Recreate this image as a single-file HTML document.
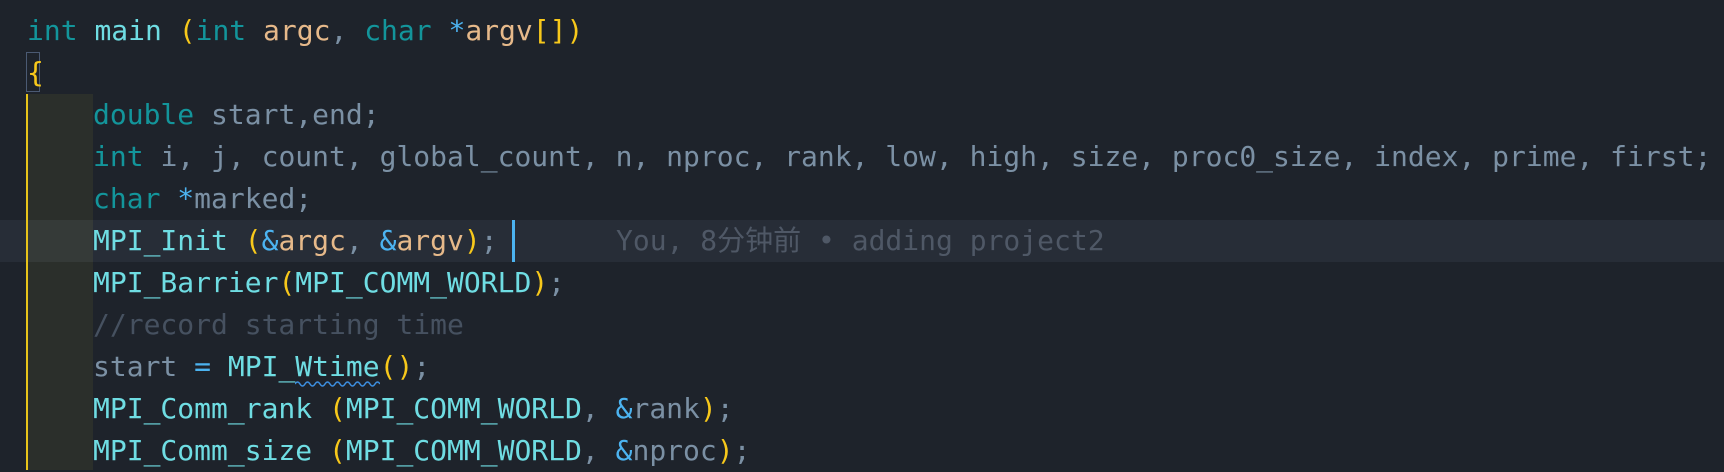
<!DOCTYPE html>
<html><head><meta charset="utf-8"><style>
html,body{margin:0;padding:0;}
body{width:1724px;height:470px;background:#1e232b;position:relative;overflow:hidden;font-family:"DejaVu Sans Mono","Liberation Mono","Noto Sans CJK SC",monospace;font-size:28px;}
.l{position:absolute;left:0;height:42px;line-height:42px;white-space:pre;}
.k{color:#13959b}.f{color:#6fdde3}.p{color:#e6b98a}.v{color:#7b90a4}.y{color:#f7c81b}.s{color:#4cb3f0}.c{color:#465160}
</style></head><body>
<div style="position:absolute;left:0;top:220px;width:1724px;height:42px;background:#272d37"></div>
<div style="position:absolute;left:27px;top:94px;width:66px;height:376px;background:#2b2f2b"></div>
<div style="position:absolute;left:27px;top:220px;width:66px;height:42px;background:#353a38"></div>
<div style="position:absolute;left:26px;top:94px;width:2px;height:376px;background:#e8c41a"></div>
<div style="position:absolute;left:26px;top:52px;width:14px;height:40px;border:1px solid #4b5a73;box-sizing:border-box"></div>
<div style="position:absolute;left:512px;top:220px;width:3px;height:42px;background:#4cb3f0"></div>
<svg style="position:absolute;left:295px;top:380px" width="85" height="8"><path d="M0 4 Q2.5 0 5 4 T10 4 T15 4 T20 4 T25 4 T30 4 T35 4 T40 4 T45 4 T50 4 T55 4 T60 4 T65 4 T70 4 T75 4 T80 4 T85 4" fill="none" stroke="#3d8fe0" stroke-width="1.5"/></svg>
<div class="l" style="top:10px;left:27px"><span class="k">int</span> <span class="f">main</span> <span class="y">(</span><span class="k">int</span> <span class="p">argc</span><span class="v">,</span> <span class="k">char</span> <span class="s">*</span><span class="p">argv</span><span class="y">[])</span></div>
<div class="l" style="top:52px;left:27px"><span class="y">{</span></div>
<div class="l" style="top:94px;left:93px"><span class="k">double</span> <span class="v">start,end;</span></div>
<div class="l" style="top:136px;left:93px"><span class="k">int</span> <span class="v">i, j, count, global_count, n, nproc, rank, low, high, size, proc0_size, index, prime, first;</span></div>
<div class="l" style="top:178px;left:93px"><span class="k">char</span> <span class="s">*</span><span class="v">marked;</span></div>
<div class="l" style="top:220px;left:93px"><span class="f">MPI_Init</span> <span class="y">(</span><span class="s">&amp;</span><span class="p">argc</span><span class="v">,</span> <span class="s">&amp;</span><span class="p">argv</span><span class="y">)</span><span class="v">;</span></div>
<div class="l" style="top:220px;left:616px;color:#4f5866">You, 8分钟前 • adding project2</div>
<div class="l" style="top:262px;left:93px"><span class="f">MPI_Barrier</span><span class="y">(</span><span class="f">MPI_COMM_WORLD</span><span class="y">)</span><span class="v">;</span></div>
<div class="l" style="top:304px;left:93px"><span class="c">//record starting time</span></div>
<div class="l" style="top:346px;left:93px"><span class="v">start</span> <span class="s">=</span> <span class="f">MPI_Wtime</span><span class="y">()</span><span class="v">;</span></div>
<div class="l" style="top:388px;left:93px"><span class="f">MPI_Comm_rank</span> <span class="y">(</span><span class="f">MPI_COMM_WORLD</span><span class="v">,</span> <span class="s">&amp;</span><span class="v">rank</span><span class="y">)</span><span class="v">;</span></div>
<div class="l" style="top:430px;left:93px"><span class="f">MPI_Comm_size</span> <span class="y">(</span><span class="f">MPI_COMM_WORLD</span><span class="v">,</span> <span class="s">&amp;</span><span class="v">nproc</span><span class="y">)</span><span class="v">;</span></div>
</body></html>
